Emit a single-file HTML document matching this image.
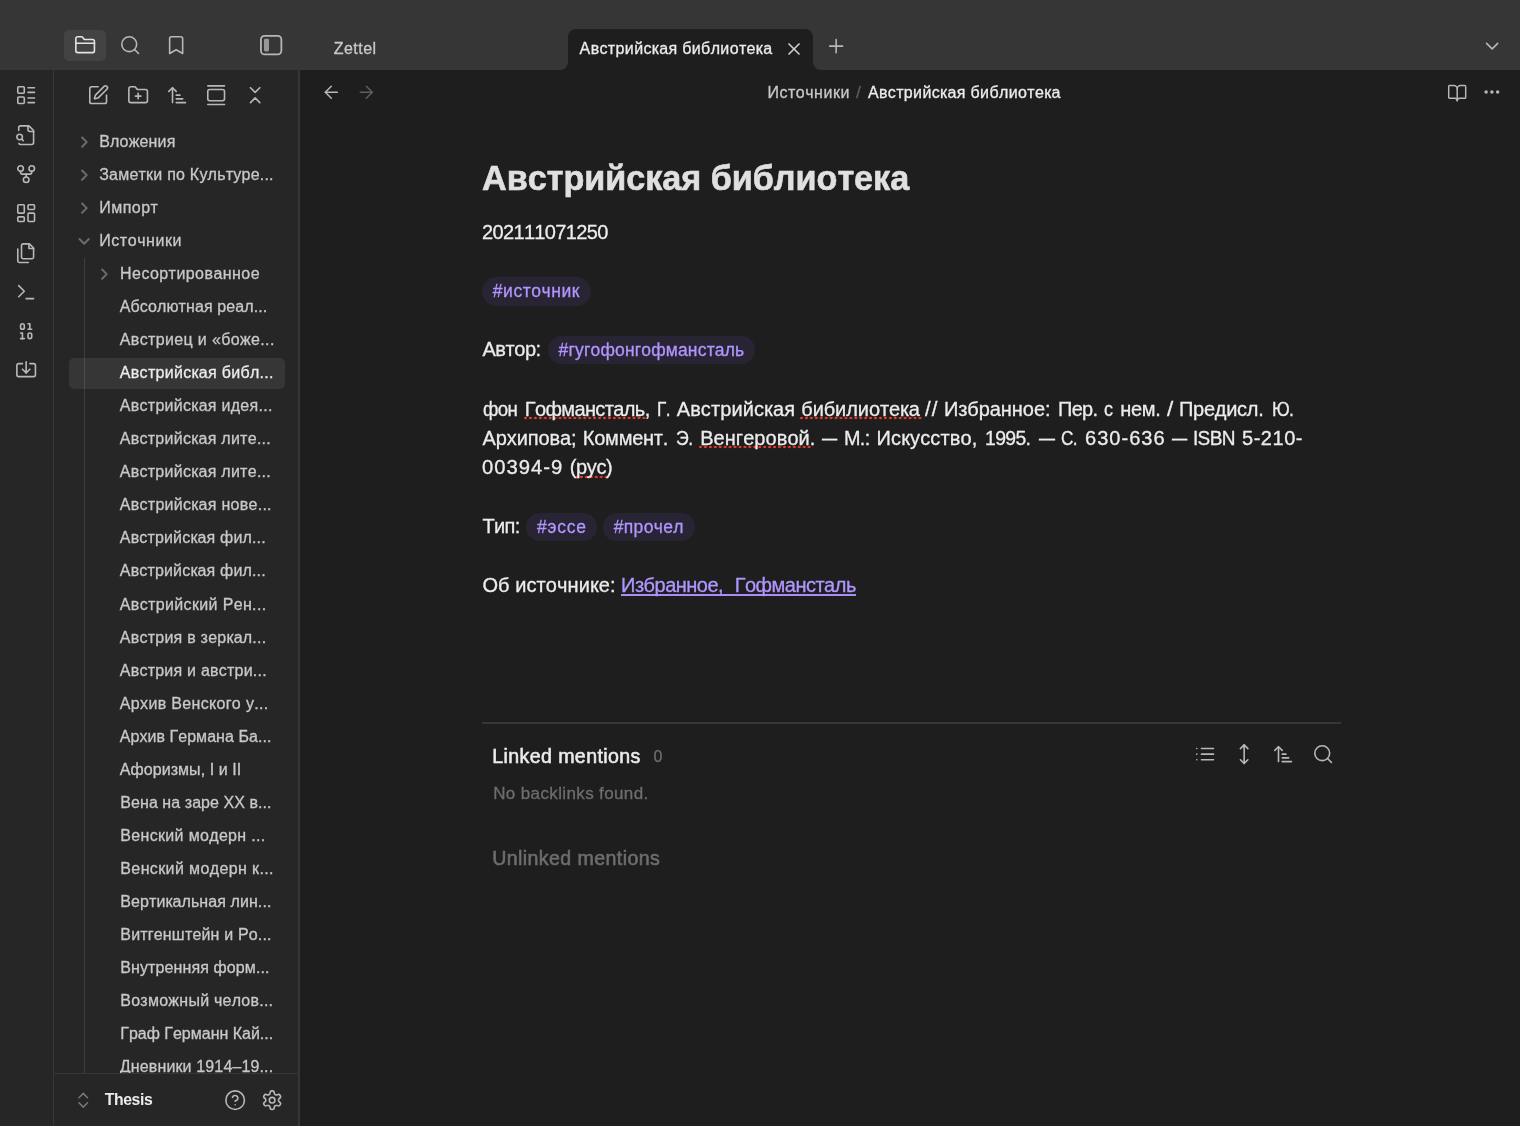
<!DOCTYPE html>
<html lang="ru"><head><meta charset="utf-8"><title>Австрийская библиотека - Thesis - Obsidian</title>
<style>

html,body{margin:0;padding:0}
body{width:1520px;height:1126px;position:relative;overflow:hidden;background:#1e1e1e;font-family:"Liberation Sans",sans-serif;font-kerning:none;-webkit-font-smoothing:antialiased}
.g{position:static;margin:0;padding:0;display:block}
h1.t,p.t,div.t,a.t{font-weight:400;text-decoration:none}
.t{position:absolute;white-space:pre;margin:0;padding:0;-webkit-text-stroke:0.3px currentColor}
.ic{position:absolute;overflow:visible}
.bx{position:absolute}
#top{left:0;top:0;width:1520px;height:70px;background:#363636}
#ribbon{left:0;top:70px;width:53px;height:1056px;background:#262626;border-right:1px solid #373737}
#side{left:54px;top:70px;width:244px;height:1056px;background:#262626;border-right:2px solid #363636;border-image:linear-gradient(90deg,#303030 50%,#363636 50%) 1}
#sidefoot{left:54px;top:1073px;width:244px;height:53px;background:#262626;border-top:1px solid #363636;box-sizing:border-box}
#tabsel{left:64px;top:29.5px;width:42px;height:31px;border-radius:5px;background:#434343}
#tab{left:568px;top:29px;width:245px;height:41px;background:#1e1e1e;border-radius:8px 8px 0 0}
.curve{width:8px;height:8px;top:62px;background:#1e1e1e}
.curve i{position:absolute;left:0;top:0;width:8px;height:8px;background:#363636;display:block}
#cl{left:560px}#cl i{border-bottom-right-radius:8px}
#cr{left:813px}#cr i{border-bottom-left-radius:8px}
#rowsel{left:69px;top:358px;width:216px;height:30.5px;border-radius:5px;background:#363636}
#guide{left:84px;top:258px;width:1px;height:815px;background:rgba(255,255,255,.11)}
.tag{background:#292434;border-radius:15px;height:28.7px}
.sq{height:4px;background:radial-gradient(circle at 50% 50%,#ff3b2c 0.9px,rgba(255,59,44,0) 1.6px) 0 0/4.95px 4px repeat-x}
#lnk{height:1.4px;background:#a98efa}
#hr{left:482px;top:722.3px;width:859px;height:1.5px;background:#363636}

#sidefoot{z-index:5}
#txt{position:absolute;left:0;top:0;width:1520px;height:1126px;will-change:transform;z-index:7}
#txt .t{z-index:1}
.foot{z-index:6}

</style></head>
<body>

<div class="bx" id="top"></div>
<div class="bx" id="ribbon"></div>
<div class="bx" id="side"></div>
<div class="bx" id="tabsel"></div>
<div class="bx" id="tab"></div>
<div class="bx curve" id="cl"><i></i></div>
<div class="bx curve" id="cr"><i></i></div>
<div class="bx" id="rowsel"></div>
<div class="bx" id="guide"></div>
<div class="bx tag" style="left:481.5px;top:277px;width:109.2px"></div>
<div class="bx tag" style="left:547.7px;top:335.7px;width:207.4px"></div>
<div class="bx tag" style="left:526.1px;top:512.6px;width:71px"></div>
<div class="bx tag" style="left:602.6px;top:512.6px;width:92.6px"></div>
<div class="bx sq" style="left:522.57px;top:415.90px;width:123.75px"></div>
<div class="bx sq" style="left:799.32px;top:415.90px;width:123.75px"></div>
<div class="bx sq" style="left:698.42px;top:445.20px;width:113.85px"></div>
<div class="bx sq" style="left:573.92px;top:474.50px;width:34.65px"></div>
<div class="bx" id="lnk" style="left:621.1px;top:594.2px;width:235.2px"></div>
<div class="bx" id="hr"></div>
<div class="bx" id="sidefoot"></div>
<svg class="ic" style="left:73.75px;top:33.65px;color:#e4e4e4;opacity:1;" width="22.3" height="22.3" viewBox="0 0 24 24" fill="none" stroke="currentColor" stroke-width="1.72" stroke-linecap="round" stroke-linejoin="round"><path d="M4 20h16a2 2 0 0 0 2-2V8a2 2 0 0 0-2-2h-7.93a2 2 0 0 1-1.66-.9l-.82-1.2A2 2 0 0 0 7.93 3H4a2 2 0 0 0-2 2v13c0 1.1.9 2 2 2Z"/><path d="M2 10h20"/></svg>
<svg class="ic" style="left:119.05px;top:33.65px;color:#b8b8b8;opacity:1;" width="22.3" height="22.3" viewBox="0 0 24 24" fill="none" stroke="currentColor" stroke-width="1.72" stroke-linecap="round" stroke-linejoin="round"><circle cx="11" cy="11" r="8"/><path d="m21 21-4.3-4.3"/></svg>
<svg class="ic" style="left:164.75px;top:33.65px;color:#b8b8b8;opacity:1;" width="22.3" height="22.3" viewBox="0 0 24 24" fill="none" stroke="currentColor" stroke-width="1.72" stroke-linecap="round" stroke-linejoin="round"><path d="m19 21-7-4-7 4V5a2 2 0 0 1 2-2h10a2 2 0 0 1 2 2v16z"/></svg>
<svg class="ic" style="left:259.75px;top:33.85px;color:#b8b8b8;opacity:1;" width="22.3" height="22.3" viewBox="0 0 24 24" fill="none" stroke="currentColor" stroke-width="1.9" stroke-linecap="round" stroke-linejoin="round"><rect x="1" y="2" width="22" height="20" rx="4"/><rect x="4.3" y="5.2" width="5.4" height="13.6" rx="1.6" fill="currentColor" stroke="none" opacity="0.75"/></svg>
<svg class="ic" style="left:87.35px;top:84.40px;color:#b8b8b8;opacity:1;" width="22.3" height="22.3" viewBox="0 0 24 24" fill="none" stroke="currentColor" stroke-width="1.72" stroke-linecap="round" stroke-linejoin="round"><path d="M12 3H5a2 2 0 0 0-2 2v14a2 2 0 0 0 2 2h14a2 2 0 0 0 2-2v-7"/><path d="M18.375 2.625a1 1 0 0 1 3 3l-9.013 9.014a2 2 0 0 1-.853.505l-2.873.840a.5.5 0 0 1-.620-.620l.840-2.873a2 2 0 0 1 .506-.852z"/></svg>
<svg class="ic" style="left:126.75px;top:84.40px;color:#b8b8b8;opacity:1;" width="22.3" height="22.3" viewBox="0 0 24 24" fill="none" stroke="currentColor" stroke-width="1.72" stroke-linecap="round" stroke-linejoin="round"><path d="M4 20h16a2 2 0 0 0 2-2V8a2 2 0 0 0-2-2h-7.93a2 2 0 0 1-1.66-.9l-.82-1.2A2 2 0 0 0 7.93 3H4a2 2 0 0 0-2 2v13c0 1.1.9 2 2 2Z"/><path d="M12 10v6"/><path d="M9 13h6"/></svg>
<svg class="ic" style="left:165.95px;top:84.40px;color:#b8b8b8;opacity:1;" width="22.3" height="22.3" viewBox="0 0 24 24" fill="none" stroke="currentColor" stroke-width="1.72" stroke-linecap="round" stroke-linejoin="round"><path d="m3 8 4-4 4 4"/><path d="M7 4v16"/><path d="M11 12h4"/><path d="M11 16h7"/><path d="M11 20h10"/></svg>
<svg class="ic" style="left:205.15px;top:84.40px;color:#b8b8b8;opacity:1;" width="22.3" height="22.3" viewBox="0 0 24 24" fill="none" stroke="currentColor" stroke-width="1.72" stroke-linecap="round" stroke-linejoin="round"><path d="M3 2h18"/><rect width="18" height="12" x="3" y="6" rx="2"/><path d="M3 22h18"/></svg>
<svg class="ic" style="left:244.45px;top:84.40px;color:#b8b8b8;opacity:1;" width="22.3" height="22.3" viewBox="0 0 24 24" fill="none" stroke="currentColor" stroke-width="1.72" stroke-linecap="round" stroke-linejoin="round"><path d="m7 20 5-5 5 5"/><path d="m7 4 5 5 5-5"/></svg>
<svg class="ic" style="left:15.40px;top:84.30px;color:#b8b8b8;opacity:1;" width="22.3" height="22.3" viewBox="0 0 24 24" fill="none" stroke="currentColor" stroke-width="1.72" stroke-linecap="round" stroke-linejoin="round"><rect width="7" height="7" x="3" y="3" rx="1"/><rect width="7" height="7" x="3" y="14" rx="1"/><path d="M14 4h7"/><path d="M14 9h7"/><path d="M14 15h7"/><path d="M14 20h7"/></svg>
<svg class="ic" style="left:15.40px;top:123.60px;color:#b8b8b8;opacity:1;" width="22.3" height="22.3" viewBox="0 0 24 24" fill="none" stroke="currentColor" stroke-width="1.72" stroke-linecap="round" stroke-linejoin="round"><path d="M14 2v4a2 2 0 0 0 2 2h4"/><path d="M4.268 21a2 2 0 0 0 1.727 1H18a2 2 0 0 0 2-2V7l-5-5H6a2 2 0 0 0-2 2v3"/><path d="m9 18-1.500-1.500"/><circle cx="5" cy="14" r="3"/></svg>
<svg class="ic" style="left:15.40px;top:162.90px;color:#b8b8b8;opacity:1;" width="22.3" height="22.3" viewBox="0 0 24 24" fill="none" stroke="currentColor" stroke-width="1.72" stroke-linecap="round" stroke-linejoin="round"><circle cx="12" cy="18" r="3"/><circle cx="6" cy="6" r="3"/><circle cx="18" cy="6" r="3"/><path d="M18 9v1a2 2 0 0 1-2 2H8a2 2 0 0 1-2-2V9"/><path d="M12 12v3"/></svg>
<svg class="ic" style="left:15.40px;top:202.20px;color:#b8b8b8;opacity:1;" width="22.3" height="22.3" viewBox="0 0 24 24" fill="none" stroke="currentColor" stroke-width="1.72" stroke-linecap="round" stroke-linejoin="round"><rect width="7" height="9" x="3" y="3" rx="1"/><rect width="7" height="5" x="14" y="3" rx="1"/><rect width="7" height="9" x="14" y="12" rx="1"/><rect width="7" height="5" x="3" y="16" rx="1"/></svg>
<svg class="ic" style="left:15.40px;top:241.50px;color:#b8b8b8;opacity:1;" width="22.3" height="22.3" viewBox="0 0 24 24" fill="none" stroke="currentColor" stroke-width="1.72" stroke-linecap="round" stroke-linejoin="round"><path d="M15.500 2H8.600c-.400 0-.800.200-1.100.500-.300.300-.500.700-.500 1.100v12.800c0 .400.200.800.500 1.100.300.300.700.500 1.100.500h9.800c.400 0 .800-.200 1.100-.500.300-.300.500-.700.500-1.100V6.500L15.500 2z"/><path d="M3 7.600v12.800c0 .400.200.800.500 1.100.300.300.700.500 1.100.500h9.800"/><path d="M15 2v5h5"/></svg>
<svg class="ic" style="left:15.40px;top:280.80px;color:#b8b8b8;opacity:1;" width="22.3" height="22.3" viewBox="0 0 24 24" fill="none" stroke="currentColor" stroke-width="1.72" stroke-linecap="round" stroke-linejoin="round"><polyline points="4 17 10 11 4 5"/><line x1="12" x2="20" y1="19" y2="19"/></svg>
<svg class="ic" style="left:15.40px;top:320.10px;color:#b8b8b8;opacity:1;" width="22.3" height="22.3" viewBox="0 0 24 24" fill="none" stroke="currentColor" stroke-width="1.72" stroke-linecap="round" stroke-linejoin="round"><rect x="14" y="14" width="4" height="6" rx="2"/><rect x="6" y="4" width="4" height="6" rx="2"/><path d="M6 20h4"/><path d="M14 10h4"/><path d="M6 14h2v6"/><path d="M14 4h2v6"/></svg>
<svg class="ic" style="left:15.40px;top:359.40px;color:#b8b8b8;opacity:1;" width="22.3" height="22.3" viewBox="0 0 24 24" fill="none" stroke="currentColor" stroke-width="1.72" stroke-linecap="round" stroke-linejoin="round"><path d="M12 3v12"/><path d="m8 11 4 4 4-4"/><path d="M8 5H4a2 2 0 0 0-2 2v10a2 2 0 0 0 2 2h16a2 2 0 0 0 2-2V7a2 2 0 0 0-2-2h-4"/></svg>
<svg class="ic" style="left:321.30px;top:82.30px;color:#b8b8b8;opacity:1;" width="20.6" height="20.6" viewBox="0 0 24 24" fill="none" stroke="currentColor" stroke-width="1.72" stroke-linecap="round" stroke-linejoin="round"><path d="m12 19-7-7 7-7"/><path d="M19 12H5"/></svg>
<svg class="ic" style="left:356.10px;top:82.30px;color:#5e5e5e;opacity:1;" width="20.6" height="20.6" viewBox="0 0 24 24" fill="none" stroke="currentColor" stroke-width="1.72" stroke-linecap="round" stroke-linejoin="round"><path d="M5 12h14"/><path d="m12 5 7 7-7 7"/></svg>
<svg class="ic" style="left:1446.60px;top:82.60px;color:#b8b8b8;opacity:1;" width="20.4" height="20.4" viewBox="0 0 24 24" fill="none" stroke="currentColor" stroke-width="1.72" stroke-linecap="round" stroke-linejoin="round"><path d="M12 7v14"/><path d="M3 18a1 1 0 0 1-1-1V4a1 1 0 0 1 1-1h5a4 4 0 0 1 4 4 4 4 0 0 1 4-4h5a1 1 0 0 1 1 1v13a1 1 0 0 1-1 1h-6a3 3 0 0 0-3 3 3 3 0 0 0-3-3z"/></svg>
<svg class="ic" style="left:1481.50px;top:82.20px;color:#b8b8b8;opacity:1;" width="19.8" height="19.8" viewBox="0 0 24 24" fill="none" stroke="currentColor" stroke-width="2.2" stroke-linecap="round" stroke-linejoin="round"><circle cx="12" cy="12" r="1"/><circle cx="19" cy="12" r="1"/><circle cx="5" cy="12" r="1"/></svg>
<svg class="ic" style="left:783.70px;top:38.60px;color:#cfcfcf;opacity:1;" width="20" height="20" viewBox="0 0 24 24" fill="none" stroke="currentColor" stroke-width="2" stroke-linecap="round" stroke-linejoin="round"><path d="M18 6 6 18"/><path d="m6 6 12 12"/></svg>
<svg class="ic" style="left:825.45px;top:35.15px;color:#b8b8b8;opacity:1;" width="22.3" height="22.3" viewBox="0 0 24 24" fill="none" stroke="currentColor" stroke-width="1.72" stroke-linecap="round" stroke-linejoin="round"><path d="M5 12h14"/><path d="M12 5v14"/></svg>
<svg class="ic" style="left:1481.35px;top:34.75px;color:#b8b8b8;opacity:1;" width="22.3" height="22.3" viewBox="0 0 24 24" fill="none" stroke="currentColor" stroke-width="1.72" stroke-linecap="round" stroke-linejoin="round"><path d="m6 9 6 6 6-6"/></svg>
<svg class="ic" style="left:1193.75px;top:743.35px;color:#b8b8b8;opacity:1;" width="22.3" height="22.3" viewBox="0 0 24 24" fill="none" stroke="currentColor" stroke-width="1.72" stroke-linecap="round" stroke-linejoin="round"><line x1="8" x2="21" y1="6" y2="6"/><line x1="8" x2="21" y1="12" y2="12"/><line x1="8" x2="21" y1="18" y2="18"/><line x1="3" x2="3.010" y1="6" y2="6"/><line x1="3" x2="3.010" y1="12" y2="12"/><line x1="3" x2="3.010" y1="18" y2="18"/></svg>
<svg class="ic" style="left:1233.05px;top:743.35px;color:#b8b8b8;opacity:1;" width="22.3" height="22.3" viewBox="0 0 24 24" fill="none" stroke="currentColor" stroke-width="1.72" stroke-linecap="round" stroke-linejoin="round"><polyline points="8 18 12 22 16 18"/><polyline points="8 6 12 2 16 6"/><line x1="12" x2="12" y1="2" y2="22"/></svg>
<svg class="ic" style="left:1272.35px;top:743.35px;color:#b8b8b8;opacity:1;" width="22.3" height="22.3" viewBox="0 0 24 24" fill="none" stroke="currentColor" stroke-width="1.72" stroke-linecap="round" stroke-linejoin="round"><path d="m3 8 4-4 4 4"/><path d="M7 4v16"/><path d="M11 12h4"/><path d="M11 16h7"/><path d="M11 20h10"/></svg>
<svg class="ic" style="left:1311.65px;top:743.35px;color:#b8b8b8;opacity:1;" width="22.3" height="22.3" viewBox="0 0 24 24" fill="none" stroke="currentColor" stroke-width="1.72" stroke-linecap="round" stroke-linejoin="round"><circle cx="11" cy="11" r="8"/><path d="m21 21-4.3-4.3"/></svg>
<svg class="ic" style="left:73.45px;top:1090.05px;color:#787878;opacity:1;z-index:6;" width="20.5" height="20.5" viewBox="0 0 24 24" fill="none" stroke="currentColor" stroke-width="1.8" stroke-linecap="round" stroke-linejoin="round"><path d="m7 15 5 5 5-5"/><path d="m7 9 5-5 5 5"/></svg>
<svg class="ic" style="left:223.75px;top:1088.95px;color:#b8b8b8;opacity:1;z-index:6;" width="22.3" height="22.3" viewBox="0 0 24 24" fill="none" stroke="currentColor" stroke-width="1.72" stroke-linecap="round" stroke-linejoin="round"><circle cx="12" cy="12" r="10"/><path d="M9.090 9a3 3 0 0 1 5.830 1c0 2-3 3-3 3"/><path d="M12 17h.010"/></svg>
<svg class="ic" style="left:260.55px;top:1088.95px;color:#b8b8b8;opacity:1;z-index:6;" width="22.3" height="22.3" viewBox="0 0 24 24" fill="none" stroke="currentColor" stroke-width="1.72" stroke-linecap="round" stroke-linejoin="round"><path d="M12.220 2h-.440a2 2 0 0 0-2 2v.180a2 2 0 0 1-1 1.730l-.430.250a2 2 0 0 1-2 0l-.150-.080a2 2 0 0 0-2.730.730l-.220.380a2 2 0 0 0 .730 2.730l.150.100a2 2 0 0 1 1 1.720v.510a2 2 0 0 1-1 1.740l-.150.090a2 2 0 0 0-.730 2.730l.220.380a2 2 0 0 0 2.730.730l.150-.080a2 2 0 0 1 2 0l.430.250a2 2 0 0 1 1 1.730V20a2 2 0 0 0 2 2h.440a2 2 0 0 0 2-2v-.180a2 2 0 0 1 1-1.730l.430-.250a2 2 0 0 1 2 0l.150.080a2 2 0 0 0 2.730-.730l.220-.390a2 2 0 0 0-.730-2.730l-.150-.080a2 2 0 0 1-1-1.740v-.500a2 2 0 0 1 1-1.740l.150-.090a2 2 0 0 0 .730-2.730l-.220-.380a2 2 0 0 0-2.730-.730l-.150.080a2 2 0 0 1-2 0l-.430-.250a2 2 0 0 1-1-1.730V4a2 2 0 0 0-2-2z"/><circle cx="12" cy="12" r="3"/></svg>
<svg class="ic" style="left:77.60px;top:135.55px;color:#6b6b6b;opacity:1;" width="12.3" height="12.3" viewBox="0 0 24 24" fill="none" stroke="currentColor" stroke-width="4" stroke-linecap="round" stroke-linejoin="round"><path d="M8 3L17 12L8 21"/></svg>
<svg class="ic" style="left:77.60px;top:168.60px;color:#6b6b6b;opacity:1;" width="12.3" height="12.3" viewBox="0 0 24 24" fill="none" stroke="currentColor" stroke-width="4" stroke-linecap="round" stroke-linejoin="round"><path d="M8 3L17 12L8 21"/></svg>
<svg class="ic" style="left:77.60px;top:201.66px;color:#6b6b6b;opacity:1;" width="12.3" height="12.3" viewBox="0 0 24 24" fill="none" stroke="currentColor" stroke-width="4" stroke-linecap="round" stroke-linejoin="round"><path d="M8 3L17 12L8 21"/></svg>
<svg class="ic" style="left:77.50px;top:235.25px;color:#6b6b6b;opacity:1;" width="12.3" height="12.3" viewBox="0 0 24 24" fill="none" stroke="currentColor" stroke-width="4" stroke-linecap="round" stroke-linejoin="round"><path d="M3 8L12 17L21 8"/></svg>
<svg class="ic" style="left:98.20px;top:268.05px;color:#6b6b6b;opacity:1;" width="12.3" height="12.3" viewBox="0 0 24 24" fill="none" stroke="currentColor" stroke-width="4" stroke-linecap="round" stroke-linejoin="round"><path d="M8 3L17 12L8 21"/></svg>
<div id="txt">
<header class="g" aria-label="tabs">
<span class="t " style="left:333.70px;top:37.66px;font-size:16px;line-height:21px;color:#c8c8c8;letter-spacing:0.484px;">Zettel</span>
<span class="t " style="left:579.60px;top:37.66px;font-size:16px;line-height:21px;color:#ececec;letter-spacing:0.366px;">Австрийская библиотека</span>
</header><div class="g" aria-label="breadcrumbs">
<span class="t " style="left:767.40px;top:81.76px;font-size:16px;line-height:21px;color:#c8c8c8;letter-spacing:0.525px;">Источники </span>
<span class="t " style="left:856.09px;top:81.76px;font-size:16px;line-height:21px;color:#5a5a5a;letter-spacing:0.000px;transform:scaleX(1.1200);transform-origin:0 0;">/ </span>
<span class="t " style="left:867.90px;top:81.76px;font-size:16px;line-height:21px;color:#ececec;letter-spacing:0.366px;">Австрийская библиотека</span>
</div><nav class="g" aria-label="files">
<div class="t row" style="left:99.20px;top:130.76px;font-size:16px;line-height:21px;color:#c8c8c8;letter-spacing:0.182px;">Вложения</div>
<div class="t row" style="left:99.20px;top:163.81px;font-size:16px;line-height:21px;color:#c8c8c8;letter-spacing:0.225px;">Заметки по Культуре...</div>
<div class="t row" style="left:99.20px;top:196.87px;font-size:16px;line-height:21px;color:#c8c8c8;letter-spacing:0.494px;">Импорт</div>
<div class="t row" style="left:99.20px;top:229.92px;font-size:16px;line-height:21px;color:#c8c8c8;letter-spacing:0.562px;">Источники</div>
<div class="t row" style="left:120.10px;top:262.98px;font-size:16px;line-height:21px;color:#c8c8c8;letter-spacing:0.452px;">Несортированное</div>
<div class="t row" style="left:119.80px;top:296.03px;font-size:16px;line-height:21px;color:#c8c8c8;letter-spacing:0.109px;">Абсолютная реал...</div>
<div class="t row" style="left:119.80px;top:329.09px;font-size:16px;line-height:21px;color:#c8c8c8;letter-spacing:0.358px;">Австриец и «боже...</div>
<div class="t row" style="left:119.80px;top:362.14px;font-size:16px;line-height:21px;color:#ececec;letter-spacing:0.308px;">Австрийская библ...</div>
<div class="t row" style="left:119.80px;top:395.20px;font-size:16px;line-height:21px;color:#c8c8c8;letter-spacing:0.284px;">Австрийская идея...</div>
<div class="t row" style="left:119.80px;top:428.25px;font-size:16px;line-height:21px;color:#c8c8c8;letter-spacing:0.269px;">Австрийская лите...</div>
<div class="t row" style="left:119.80px;top:461.31px;font-size:16px;line-height:21px;color:#c8c8c8;letter-spacing:0.269px;">Австрийская лите...</div>
<div class="t row" style="left:119.80px;top:494.36px;font-size:16px;line-height:21px;color:#c8c8c8;letter-spacing:0.279px;">Австрийская нове...</div>
<div class="t row" style="left:119.80px;top:527.42px;font-size:16px;line-height:21px;color:#c8c8c8;letter-spacing:0.165px;">Австрийская фил...</div>
<div class="t row" style="left:119.80px;top:560.47px;font-size:16px;line-height:21px;color:#c8c8c8;letter-spacing:0.165px;">Австрийская фил...</div>
<div class="t row" style="left:119.80px;top:593.53px;font-size:16px;line-height:21px;color:#c8c8c8;letter-spacing:0.354px;">Австрийский Рен...</div>
<div class="t row" style="left:119.80px;top:626.58px;font-size:16px;line-height:21px;color:#c8c8c8;letter-spacing:0.237px;">Австрия в зеркал...</div>
<div class="t row" style="left:119.80px;top:659.64px;font-size:16px;line-height:21px;color:#c8c8c8;letter-spacing:0.229px;">Австрия и австри...</div>
<div class="t row" style="left:119.80px;top:692.69px;font-size:16px;line-height:21px;color:#c8c8c8;letter-spacing:0.344px;">Архив Венского у...</div>
<div class="t row" style="left:119.80px;top:725.75px;font-size:16px;line-height:21px;color:#c8c8c8;letter-spacing:0.046px;">Архив Германа Ба...</div>
<div class="t row" style="left:119.80px;top:758.80px;font-size:16px;line-height:21px;color:#c8c8c8;letter-spacing:0.060px;">Афоризмы, I и II</div>
<div class="t row" style="left:120.30px;top:791.86px;font-size:16px;line-height:21px;color:#c8c8c8;letter-spacing:0.065px;">Вена на заре XX в...</div>
<div class="t row" style="left:120.30px;top:824.91px;font-size:16px;line-height:21px;color:#c8c8c8;letter-spacing:0.329px;">Венский модерн ...</div>
<div class="t row" style="left:120.30px;top:857.97px;font-size:16px;line-height:21px;color:#c8c8c8;letter-spacing:0.383px;">Венский модерн к...</div>
<div class="t row" style="left:120.30px;top:891.02px;font-size:16px;line-height:21px;color:#c8c8c8;letter-spacing:0.082px;">Вертикальная лин...</div>
<div class="t row" style="left:120.30px;top:924.08px;font-size:16px;line-height:21px;color:#c8c8c8;letter-spacing:0.177px;">Витгенштейн и Ро...</div>
<div class="t row" style="left:120.30px;top:957.13px;font-size:16px;line-height:21px;color:#c8c8c8;letter-spacing:0.105px;">Внутренняя форм...</div>
<div class="t row" style="left:120.30px;top:990.19px;font-size:16px;line-height:21px;color:#c8c8c8;letter-spacing:0.249px;">Возможный челов...</div>
<div class="t row" style="left:120.30px;top:1023.24px;font-size:16px;line-height:21px;color:#c8c8c8;letter-spacing:-0.010px;">Граф Германн Кай...</div>
<div class="t row" style="left:119.80px;top:1056.30px;font-size:16px;line-height:21px;color:#c8c8c8;letter-spacing:0.139px;height:17.20px;overflow:hidden;">Дневники 1914–19...</div>
<span class="t foot" style="left:104.70px;top:1089.13px;font-size:15.8px;line-height:21px;color:#ececec;font-weight:700;letter-spacing:-0.386px;-webkit-text-stroke:0;">Thesis</span>
</nav><main class="g">
<h1 class="t " style="left:482.10px;top:156.45px;font-size:34.2px;line-height:44px;color:#e0e0e0;font-weight:700;letter-spacing:-0.030px;-webkit-text-stroke:0.6px currentColor;">Австрийская библиотека</h1>
<p class="t " style="left:482.00px;top:218.77px;font-size:20px;line-height:26px;color:#ececec;letter-spacing:-0.651px;">202111071250</p>
<p class="g">
<a class="t " style="left:492.80px;top:280.44px;font-size:17.5px;line-height:23px;color:#b096ff;letter-spacing:0.554px;">#источник</a>
</p><p class="g">
<span class="t " style="left:482.40px;top:336.27px;font-size:20px;line-height:26px;color:#ececec;letter-spacing:-0.436px;">Автор: </span>
<a class="t " style="left:558.60px;top:339.04px;font-size:17.5px;line-height:23px;color:#b096ff;letter-spacing:0.171px;">#гугофонгофмансталь</a>
</p><p class="g">
<span class="t " style="left:482.50px;top:395.67px;font-size:20px;line-height:26px;color:#ececec;letter-spacing:-0.700px;transform:scaleX(0.9360);transform-origin:0 0;">фон </span>
<span class="t " style="left:524.70px;top:395.67px;font-size:20px;line-height:26px;color:#ececec;letter-spacing:-0.610px;">Гофмансталь, </span>
<span class="t " style="left:657.33px;top:395.67px;font-size:20px;line-height:26px;color:#ececec;letter-spacing:-0.700px;transform:scaleX(0.8600);transform-origin:0 0;">Г. </span>
<span class="t " style="left:676.70px;top:395.67px;font-size:20px;line-height:26px;color:#ececec;letter-spacing:0.103px;">Австрийская </span>
<span class="t " style="left:801.30px;top:395.67px;font-size:20px;line-height:26px;color:#ececec;letter-spacing:-0.085px;">бибилиотека </span>
<span class="t " style="left:925.40px;top:395.67px;font-size:20px;line-height:26px;color:#ececec;letter-spacing:1.000px;transform:scaleX(1.0190);transform-origin:0 0;">// </span>
<span class="t " style="left:943.90px;top:395.67px;font-size:20px;line-height:26px;color:#ececec;letter-spacing:-0.054px;">Избранное: </span>
<span class="t " style="left:1057.50px;top:395.67px;font-size:20px;line-height:26px;color:#ececec;letter-spacing:-0.700px;transform:scaleX(0.9967);transform-origin:0 0;">Пер. </span>
<span class="t " style="left:1104.30px;top:395.67px;font-size:20px;line-height:26px;color:#ececec;letter-spacing:0.000px;transform:scaleX(0.9000);transform-origin:0 0;">с </span>
<span class="t " style="left:1120.20px;top:395.67px;font-size:20px;line-height:26px;color:#ececec;letter-spacing:-0.276px;">нем. </span>
<span class="t " style="left:1167.41px;top:395.67px;font-size:20px;line-height:26px;color:#ececec;letter-spacing:0.000px;transform:scaleX(1.1200);transform-origin:0 0;">/ </span>
<span class="t " style="left:1178.90px;top:395.67px;font-size:20px;line-height:26px;color:#ececec;letter-spacing:-0.250px;">Предисл. </span>
<span class="t " style="left:1271.60px;top:395.67px;font-size:20px;line-height:26px;color:#ececec;letter-spacing:-0.700px;transform:scaleX(0.8762);transform-origin:0 0;">Ю. </span>
<span class="t " style="left:482.50px;top:424.97px;font-size:20px;line-height:26px;color:#ececec;letter-spacing:-0.094px;">Архипова; </span>
<span class="t " style="left:582.80px;top:424.97px;font-size:20px;line-height:26px;color:#ececec;letter-spacing:-0.231px;">Коммент. </span>
<span class="t " style="left:676.20px;top:424.97px;font-size:20px;line-height:26px;color:#ececec;letter-spacing:-0.700px;transform:scaleX(0.8869);transform-origin:0 0;">Э. </span>
<span class="t " style="left:700.20px;top:424.97px;font-size:20px;line-height:26px;color:#ececec;letter-spacing:0.050px;">Венгеровой. </span>
<span class="t " style="left:821.80px;top:424.97px;font-size:20px;line-height:26px;color:#ececec;letter-spacing:0.000px;transform:scaleX(0.7600);transform-origin:0 0;">— </span>
<span class="t " style="left:843.90px;top:424.97px;font-size:20px;line-height:26px;color:#ececec;letter-spacing:-0.700px;transform:scaleX(0.9915);transform-origin:0 0;">М.: </span>
<span class="t " style="left:876.60px;top:424.97px;font-size:20px;line-height:26px;color:#ececec;letter-spacing:0.129px;">Искусство, </span>
<span class="t " style="left:985.00px;top:424.97px;font-size:20px;line-height:26px;color:#ececec;letter-spacing:-0.700px;transform:scaleX(0.9724);transform-origin:0 0;">1995. </span>
<span class="t " style="left:1038.60px;top:424.97px;font-size:20px;line-height:26px;color:#ececec;letter-spacing:0.000px;transform:scaleX(0.8000);transform-origin:0 0;">— </span>
<span class="t " style="left:1060.83px;top:424.97px;font-size:20px;line-height:26px;color:#ececec;letter-spacing:-0.700px;transform:scaleX(0.8600);transform-origin:0 0;">С. </span>
<span class="t " style="left:1084.60px;top:424.97px;font-size:20px;line-height:26px;color:#ececec;letter-spacing:1.000px;transform:scaleX(1.0027);transform-origin:0 0;">630-636 </span>
<span class="t " style="left:1171.70px;top:424.97px;font-size:20px;line-height:26px;color:#ececec;letter-spacing:0.000px;transform:scaleX(0.7600);transform-origin:0 0;">— </span>
<span class="t " style="left:1192.90px;top:424.97px;font-size:20px;line-height:26px;color:#ececec;letter-spacing:-0.700px;transform:scaleX(0.9519);transform-origin:0 0;">ISBN </span>
<span class="t " style="left:1242.00px;top:424.97px;font-size:20px;line-height:26px;color:#ececec;letter-spacing:0.530px;">5-210-</span>
<span class="t " style="left:482.40px;top:454.17px;font-size:20px;line-height:26px;color:#ececec;letter-spacing:1.000px;transform:scaleX(1.0116);transform-origin:0 0;">00394-9 </span>
<span class="t " style="left:569.80px;top:454.17px;font-size:20px;line-height:26px;color:#ececec;letter-spacing:-0.398px;">(рус)</span>
</p><p class="g">
<span class="t " style="left:482.40px;top:513.27px;font-size:20px;line-height:26px;color:#ececec;letter-spacing:-0.642px;">Тип: </span>
<a class="t " style="left:537.10px;top:516.04px;font-size:17.5px;line-height:23px;color:#b096ff;letter-spacing:0.754px;">#эссе </a>
<a class="t " style="left:613.70px;top:516.04px;font-size:17.5px;line-height:23px;color:#b096ff;letter-spacing:0.354px;">#прочел</a>
</p><p class="g">
<span class="t " style="left:482.40px;top:571.87px;font-size:20px;line-height:26px;color:#ececec;letter-spacing:0.089px;">Об источнике: </span>
<a class="t " style="left:621.10px;top:571.87px;font-size:20px;line-height:26px;color:#b096ff;letter-spacing:-0.509px;">Избранное, </a>
<a class="t " style="left:734.70px;top:571.87px;font-size:20px;line-height:26px;color:#b096ff;letter-spacing:-0.508px;">Гофмансталь</a>
</p>
<section class="g" aria-label="backlinks">
<span class="t " style="left:492.20px;top:743.61px;font-size:19.6px;line-height:25px;color:#ececec;letter-spacing:0.394px;-webkit-text-stroke:0.55px currentColor;">Linked mentions</span>
<span class="t " style="left:653.60px;top:746.36px;font-size:16px;line-height:21px;color:#6e6e6e;letter-spacing:0.000px;">0</span>
<span class="t " style="left:493.20px;top:782.91px;font-size:17px;line-height:22px;color:#6e6e6e;letter-spacing:0.372px;">No backlinks found.</span>
<span class="t " style="left:492.20px;top:846.01px;font-size:19.6px;line-height:25px;color:#6e6e6e;letter-spacing:0.406px;-webkit-text-stroke:0.55px currentColor;">Unlinked mentions</span>
</section></main>
</div>
</body></html>
